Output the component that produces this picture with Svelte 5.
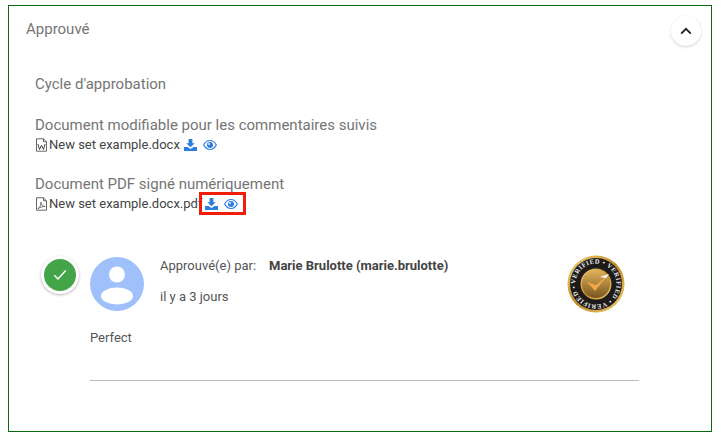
<script>
  const docs = [
    { title: "Document modifiable pour les commentaires suivis", name: "New set example.docx", kind: "word" },
    { title: "Document PDF signé numériquement", name: "New set example.docx.pdf", kind: "pdf" }
  ];
</script>

<main class="card">
  <header class="head">
    <span class="status">Approuvé</span>
    <button class="toggle" aria-label="Réduire">
      <svg width="12" height="8" viewBox="0 0 12 8"><path d="M1.200 6.600 6 1.900l4.800 4.700" fill="none" stroke="#222" stroke-width="1.900"/></svg>
    </button>
  </header>

  <section class="body">
    <h2 class="cycle">Cycle d'approbation</h2>

    {#each docs as d}
      <div class="doc">
        <div class="doc-title">{d.title}</div>
        <div class="file">
          <svg class="ficon" width="13" height="14" viewBox="0 0 13 14" fill="none" stroke="#666" stroke-width="1">
            <path d="M1.500.8h7l3 3v9.400h-10z"/><path d="M8.500.8v3h3"/>
            {#if d.kind === "word"}
              <path d="M2.900 6l1.600 5.500 2-4.300 2 4.300L10 6" stroke-width="1" stroke="#444"/>
            {:else}
              <path d="M2.800 11.800c2.200-1.300 3.200-3.700 3.100-6.600.3 2.600 1.700 4 4.200 4.300-2.600 0-5.100.7-7.300 2.300z" stroke-width=".9"/>
            {/if}
          </svg>
          <span class="fname">{d.name}</span>
          <span class="actions" class:marked={d.kind === "pdf"}>
            <svg width="13" height="12" viewBox="0 0 13 12" fill="#2f7de1">
              <path d="M4.600 0h3.800v4.200h2.400L6.500 8.200 2.200 4.200h2.400z"/>
              <path d="M0 8h3.400l3.100 2 3.100-2H13v4H0z"/>
            </svg>
            <svg width="14" height="10" viewBox="0 0 14 10">
              <path fill="#2f7de1" fill-rule="evenodd" d="M7 0c3 0 5.500 2 7 5-1.500 3-4 5-7 5S1.500 8 0 5c1.500-3 4-5 7-5zm0 1.100C4.700 1.100 2.700 2.600 1.300 5c1.400 2.400 3.400 3.900 5.700 3.900s4.300-1.500 5.700-3.900C11.300 2.600 9.300 1.100 7 1.100z"/>
              <circle cx="7" cy="5" r="3" fill="#2f7de1"/>
              <circle cx="6" cy="4" r=".9" fill="#fff"/>
            </svg>
          </span>
        </div>
      </div>
    {/each}

    <div class="approval">
      <div class="check">
        <svg width="14" height="12" viewBox="0 0 14 12"><path d="M1.300 6.300 5 10l7.700-8.500" fill="none" stroke="#fff" stroke-width="1.500"/></svg>
      </div>
      <div class="content">
        <div class="top">
          <svg class="avatar" width="54" height="54" viewBox="0 0 54 54">
            <circle cx="27" cy="27" r="27" fill="#a0c0fb"/>
            <circle cx="27" cy="17.500" r="8" fill="#fff"/>
            <ellipse cx="27" cy="39" rx="16" ry="8.500" fill="#fff"/>
          </svg>
          <div class="meta">
            <div class="line"><span class="label">Approuvé(e) par:</span><strong>Marie Brulotte (marie.brulotte)</strong></div>
            <div class="ago">il y a 3 jours</div>
          </div>
          <svg class="seal" width="58" height="58" viewBox="0 0 58 58">
            <defs>
              <linearGradient id="gold" x1="0" y1="0" x2="1" y2="1"><stop offset="0" stop-color="#f3d479"/><stop offset=".5" stop-color="#c08a2a"/><stop offset="1" stop-color="#f0cf72"/></linearGradient>
              <linearGradient id="inner" x1="0" y1="0" x2="0" y2="1"><stop offset="0" stop-color="#e0b25a"/><stop offset="1" stop-color="#7a5520"/></linearGradient>
              <path id="ring" d="M29 29m-20.500 0a20.500 20.500 0 1 1 41 0a20.500 20.500 0 1 1-41 0"/>
            </defs>
            <circle cx="29" cy="29" r="28.500" fill="url(#gold)"/>
            <circle cx="29" cy="29" r="26" fill="#1d1b1a"/>
            <text class="seal-text" fill="#eee"><textPath href="#ring" startOffset="0" textLength="126">VERIFIED • VERIFIED • VERIFIED •</textPath></text>
            <circle cx="29" cy="29" r="15.500" fill="url(#gold)"/>
            <circle cx="29" cy="29" r="14" fill="url(#inner)"/>
            <path d="M20 27l8 9 13-16-12 10z" fill="#f0a94a"/>
            <path d="M33 22l9-3-3 4z" fill="#fff"/>
          </svg>
        </div>
        <p class="comment">Perfect</p>
        <hr class="rule" />
      </div>
    </div>
  </section>
</main>

<style>
  :global(body) {
    margin: 0;
    background: #fff;
    font-family: Roboto, "Liberation Sans", sans-serif;
  }
  .card {
    box-sizing: border-box;
    width: 704px;
    height: 427px;
    margin: 5px 0 0 8px;
    border: 1px solid #0b6a0b;
    color: #757575;
  }
  .head {
    display: flex;
    justify-content: space-between;
    align-items: flex-start;
    padding: 15px 10px 0 17px;
    height: 46px;
    box-sizing: border-box;
  }
  .status {
    font-size: 15px;
    line-height: 17px;
  }
  .toggle {
    width: 30px;
    height: 30px;
    margin-top: -5px;
    padding: 0;
    border: 0;
    border-radius: 50%;
    background: #fff;
    box-shadow: 0 1px 3px rgba(0, 0, 0, .18);
    display: flex;
    align-items: center;
    justify-content: center;
  }
  .body {
    padding: 24px 0 0 26px;
  }
  .cycle {
    margin: 0 0 24px;
    font-weight: 400;
    font-size: 15px;
    line-height: 17px;
  }
  .doc {
    height: 59px;
  }
  .doc-title {
    font-size: 15px;
    line-height: 17px;
    margin-bottom: 2px;
  }
  .file {
    display: flex;
    align-items: center;
    height: 17px;
    color: #444;
    font-size: 13px;
  }
  .ficon {
    margin-right: 1px;
  }
  .fname {
    margin-right: 3px;
  }
  .actions {
    display: inline-flex;
    align-items: center;
    gap: 6px;
    margin-left: 1px;
    position: relative;
  }
  .actions.marked {
    margin-left: 0;
  }
  .actions.marked::after {
    content: "";
    position: absolute;
    left: -6px;
    top: -6px;
    width: 47px;
    height: 23px;
    box-sizing: border-box;
    border: 3px solid #f01d0a;
  }
  .approval {
    display: flex;
    align-items: flex-start;
    margin-top: 22px;
  }
  .check {
    width: 32px;
    height: 32px;
    margin: -1px 0 0 6px;
    border-radius: 50%;
    background: #43a548;
    border: 3px solid #fff;
    box-shadow: 0 1px 3px rgba(0, 0, 0, .3);
    display: flex;
    align-items: center;
    justify-content: center;
    flex: none;
  }
  .content {
    width: 549px;
    margin-left: 11px;
  }
  .top {
    display: flex;
    align-items: flex-start;
  }
  .avatar {
    flex: none;
  }
  .meta {
    margin-left: 16px;
    font-size: 13px;
    color: #555;
    width: 406.500px;
  }
  .line {
    display: flex;
    line-height: 16px;
    margin-top: 1px;
  }
  .label {
    width: 109px;
  }
  .line strong {
    font-weight: 700;
    color: #444;
  }
  .ago {
    margin-top: 15px;
    line-height: 16px;
  }
  .seal {
    flex: none;
    margin-top: -2px;
  }
  .seal-text {
    font: 700 6.500px "Liberation Serif", serif;
  }
  .comment {
    margin: 17px 0 0;
    font-size: 13px;
    line-height: 16px;
    color: #555;
  }
  .rule {
    margin: 34px 0 0;
    border: 0;
    border-top: 1px solid #bdbdbd;
  }
</style>
